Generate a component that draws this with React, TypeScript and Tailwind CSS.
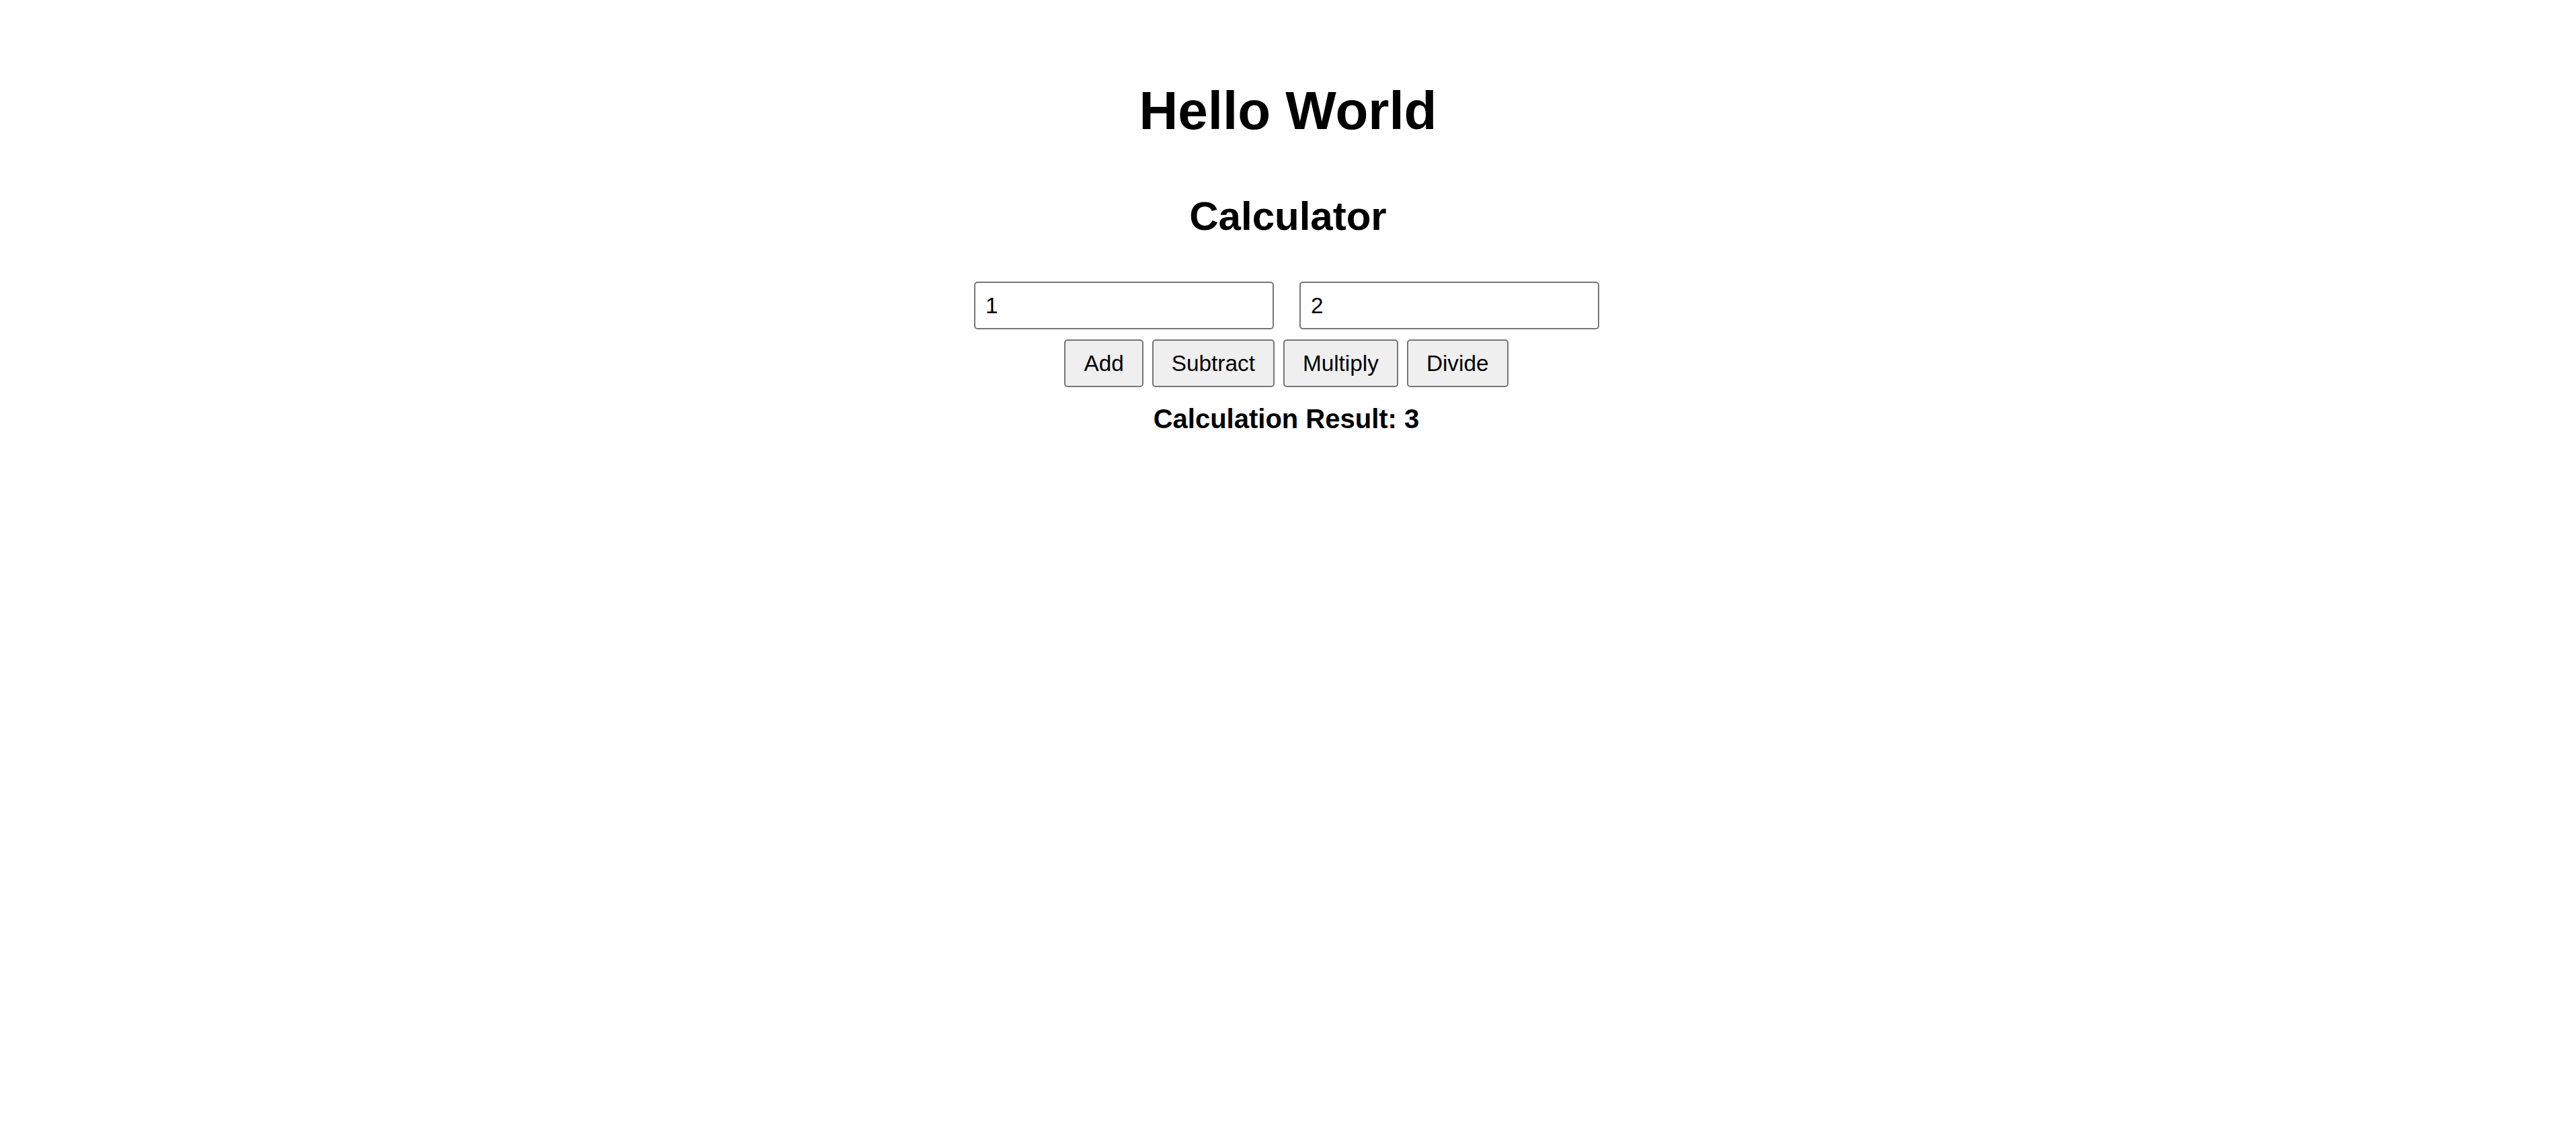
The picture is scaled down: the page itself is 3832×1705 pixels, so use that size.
import { useState } from "react"

export default function App() {
    const [a, setA] = useState("1")
    const [b, setB] = useState("2")
    const [result, setResult] = useState<number | string>(3)

    const calc = (op: string) => {
        const x = parseFloat(a)
        const y = parseFloat(b)
        if (op === "add") setResult(x + y)
        if (op === "sub") setResult(x - y)
        if (op === "mul") setResult(x * y)
        if (op === "div") setResult(y === 0 ? "Cannot divide by zero" : x / y)
    }

    const btn =
        "h-[71px] px-[27px] bg-[#efefef] border-2 border-[#767676] rounded-[5px] text-[33.33px] leading-[38px] text-black"

    return (
        <div className="min-h-screen bg-white text-black font-['Liberation_Sans',Arial,sans-serif] pt-[119px] text-center">

            {/* Headings */}
            <h1 className="text-[80px] leading-[92px] font-bold">Hello World</h1>
            <h2 className="mt-[76px] text-[60px] leading-[69px] font-bold">Calculator</h2>

            {/* Inputs */}
            <div className="mt-[63px] flex justify-center gap-[38px] pr-[4px]">
                <input
                    type="text"
                    value={a}
                    onChange={(e) => setA(e.target.value)}
                    className="w-[446px] h-[71px] pl-[15px] border-2 border-[#767676] rounded-[5px] text-[33.33px] text-black outline-none"
                />
                <input
                    type="text"
                    value={b}
                    onChange={(e) => setB(e.target.value)}
                    className="w-[446px] h-[71px] pl-[15px] border-2 border-[#767676] rounded-[5px] text-[33.33px] text-black outline-none"
                />
            </div>

            {/* Operations */}
            <div className="mt-[15px] flex justify-center gap-[13px] pr-[5px]">
                <button className={btn} onClick={() => calc("add")}>Add</button>
                <button className={btn} onClick={() => calc("sub")}>Subtract</button>
                <button className={btn} onClick={() => calc("mul")}>Multiply</button>
                <button className={btn} onClick={() => calc("div")}>Divide</button>
            </div>

            {/* Result */}
            <div className="mt-[24px] pr-[5px] text-[40px] leading-[46px] font-bold">
                Calculation Result: {result}
            </div>
        </div>
    )
}
